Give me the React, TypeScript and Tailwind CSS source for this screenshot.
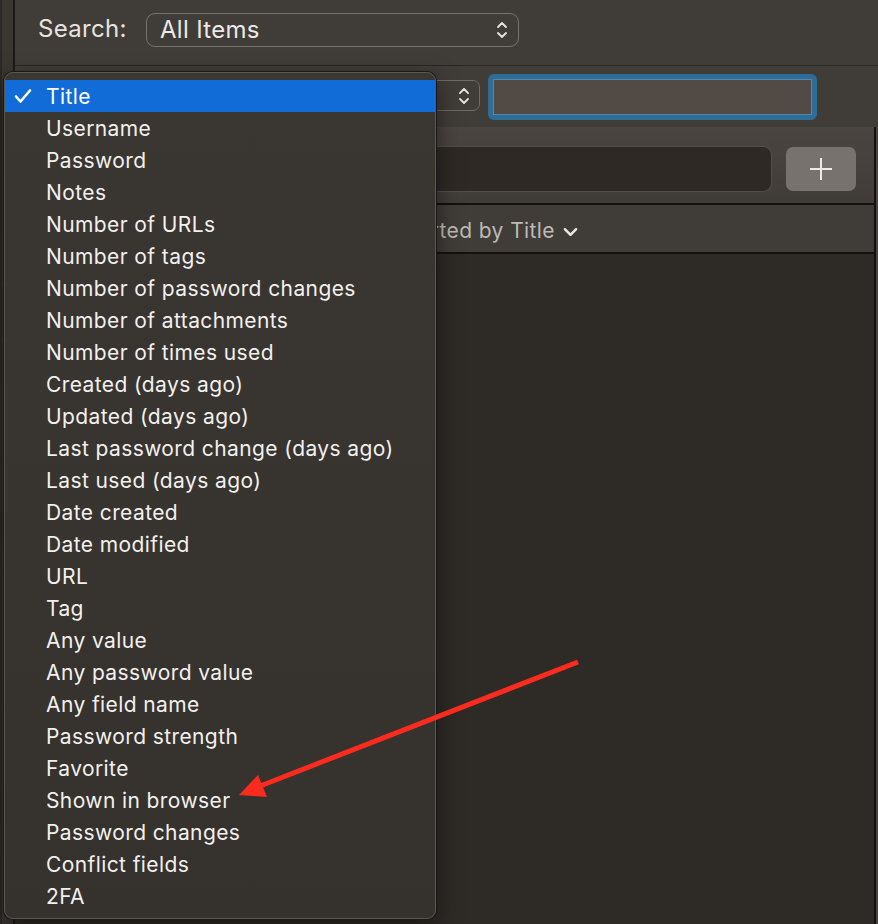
import React from "react";

const items = [
  "Title",
  "Username",
  "Password",
  "Notes",
  "Number of URLs",
  "Number of tags",
  "Number of password changes",
  "Number of attachments",
  "Number of times used",
  "Created (days ago)",
  "Updated (days ago)",
  "Last password change (days ago)",
  "Last used (days ago)",
  "Date created",
  "Date modified",
  "URL",
  "Tag",
  "Any value",
  "Any password value",
  "Any field name",
  "Password strength",
  "Favorite",
  "Shown in browser",
  "Password changes",
  "Conflict fields",
  "2FA",
];

function UpDown({ className }: { className?: string }) {
  return (
    <svg viewBox="0 0 12 20" className={className} fill="none" stroke="currentColor" strokeWidth="1.8" strokeLinecap="round" strokeLinejoin="round">
      <path d="M2 7 L6 3 L10 7" />
      <path d="M2 13 L6 17 L10 13" />
    </svg>
  );
}

export default function App() {
  return (
    <div
      className="relative w-[878px] h-[924px] overflow-hidden flex bg-[#2e2a26] text-[#f2f0ee]"
      style={{ fontFamily: "Inter, 'Noto Sans', sans-serif" }}
    >
      {/* left sidebar strip */}
      <div className="w-[15px] shrink-0 bg-[#3a3632] border-l-[2px] border-l-[#2c2926] border-r-[2px] border-r-[#1c1a18] flex flex-col">
        <div className="h-[283px]" />
        <div className="h-[1px] bg-[#4a4642]" />
        <div className="h-[56px]" />
        <div className="h-[1px] bg-[#4a4642]" />
      </div>

      {/* main */}
      <div className="flex-1 flex flex-col">
        {/* top row */}
        <div className="h-[66px] shrink-0 bg-[#403c38] border-b border-[#2a2724] flex items-start pt-[13px] pl-[23px]">
          <span className="text-[24px] tracking-[0.3px] text-[#e6e3e0] w-[108px] leading-[32px]">Search:</span>
          <div className="w-[373px] h-[34px] rounded-[9px] border border-[#76716c] flex items-center pl-[13px] pr-[10px] justify-between">
            <span className="text-[24px] tracking-[0.3px] text-[#ebe8e5] leading-none">All Items</span>
            <UpDown className="w-[12px] h-[20px] text-[#e6e3e0]" />
          </div>
        </div>

        {/* second row */}
        <div className="h-[61px] shrink-0 bg-[#403c38] flex items-start pt-[8px] pl-[131px]">
          <div className="w-[334px] h-[31px] mt-[6px] rounded-[7px] border border-[#6f6a66] flex items-center justify-end pr-[9px]">
            <UpDown className="w-[12px] h-[20px] text-[#e6e3e0]" />
          </div>
          <div className="ml-[8px] w-[329px] h-[46px] rounded-[6px] bg-[#2f6c96] p-[5px]">
            <div className="w-full h-full bg-[#524a45] border border-[#4d88b3]" />
          </div>
        </div>

        {/* panel */}
        <div className="flex-1 flex">
          <div className="w-[861px] flex flex-col border-r-[2px] border-[#121110]">
            <div className="h-[76px] shrink-0 bg-gradient-to-b from-[#4a4541] to-[#403c38] flex items-start pt-[19px] pl-[20px] pr-[18px] gap-[14px]">
              <div className="flex-1 h-[46px] rounded-[9px] bg-[#2e2925] border border-[#534e49]" />
              <div className="mt-[1px] w-[70px] h-[44px] rounded-[7px] bg-[#77726d] flex items-center justify-center">
                <svg viewBox="0 0 24 24" className="w-[24px] h-[24px]" fill="none" stroke="#ecebe9" strokeWidth="2">
                  <path d="M12 1 V23 M1 12 H23" />
                </svg>
              </div>
            </div>
            <div className="h-[2px] bg-[#121110]" />
            <div className="h-[47px] shrink-0 bg-[#403c38] flex items-center pl-[389px] pt-[5px]">
              <span className="text-[21px] tracking-[0.4px] text-[#bdb9b4]">Sorted by Title</span>
              <svg viewBox="0 0 16 10" className="ml-[8px] w-[15px] h-[10px] mt-[2px]" fill="none" stroke="#ebe8e5" strokeWidth="2.6" strokeLinecap="round" strokeLinejoin="round">
                <path d="M2 2 L8 8 L14 2" />
              </svg>
            </div>
            <div className="h-[2px] bg-[#121110]" />
            <div className="flex-1 bg-[#2e2a26]" />
          </div>
          <div className="flex-1 bg-[#4a4541]" />
        </div>
      </div>

      {/* popup menu */}
      <div className="absolute left-[4px] top-[72px] w-[432px] h-[847px] rounded-[9px] bg-gradient-to-b from-[#3a3632] to-[#35312d] border border-[#5b5752] shadow-[0_0_0_1px_#1a1816,0_8px_24px_rgba(0,0,0,0.5)] pt-[7px]">
        {items.map((t, i) => (
          <div
            key={t}
            className={
              i === 0
                ? "h-[32px] flex items-center bg-[#116cd8] text-white"
                : "h-[32px] flex items-center text-[#f2f0ee]"
            }
          >
            <div className="w-[41px] flex items-center pl-[9px]">
              {i === 0 && (
                <svg viewBox="0 0 18 16" className="w-[18px] h-[16px]" fill="none" stroke="#ffffff" strokeWidth="2.6" strokeLinecap="round" strokeLinejoin="round">
                  <path d="M2 8.5 L6.5 13.5 L16 2.5" />
                </svg>
              )}
            </div>
            <span className="text-[21px] tracking-[0.4px] leading-none">{t}</span>
          </div>
        ))}
      </div>

      {/* annotation arrow */}
      <svg className="absolute inset-0 pointer-events-none" width="878" height="924" viewBox="0 0 878 924">
        <line x1="578" y1="662" x2="255" y2="788" stroke="#fb2b1e" strokeWidth="5" />
        <polygon points="239,795 258,775 267,797" fill="#fb2b1e" />
      </svg>
    </div>
  );
}
